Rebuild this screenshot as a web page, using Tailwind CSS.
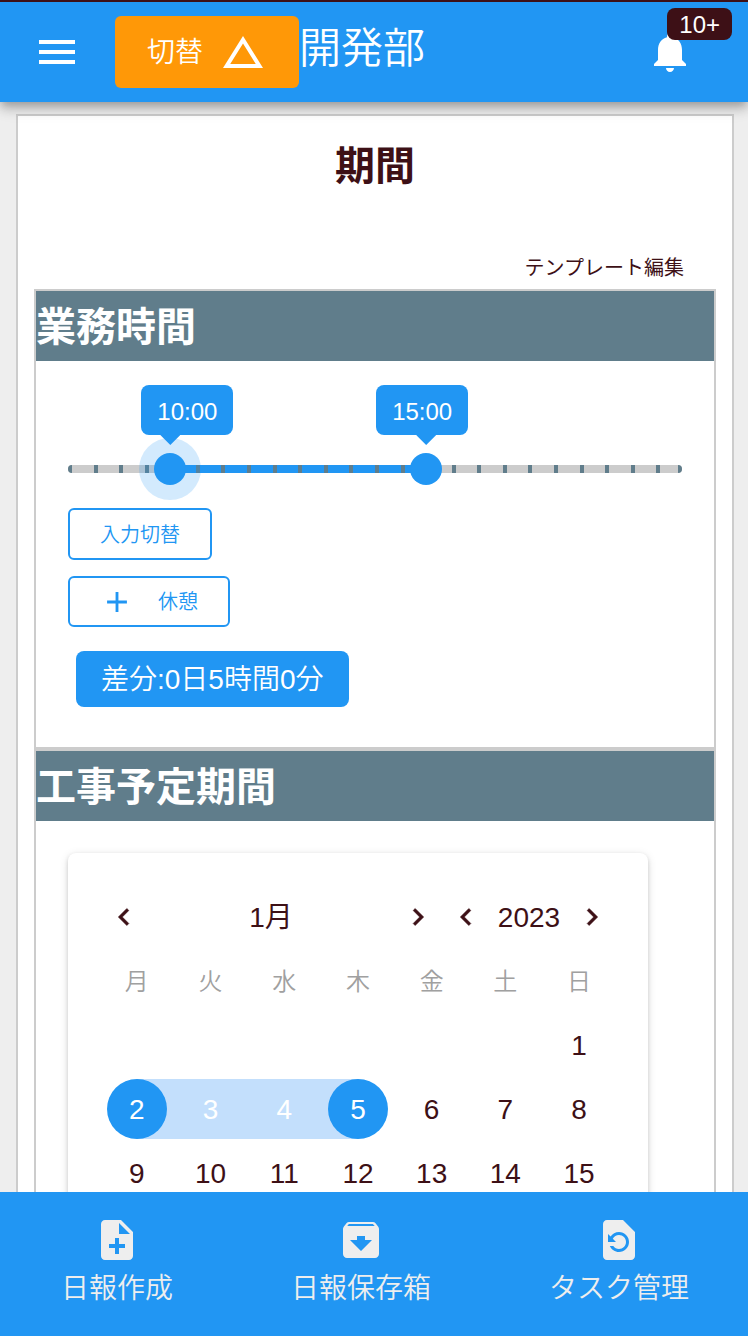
<!DOCTYPE html>
<html lang="ja">
<head>
<meta charset="utf-8">
<meta name="viewport" content="width=device-width, initial-scale=1">
<title>開発部</title>
<script src="https://cdn.jsdelivr.net/npm/@tailwindcss/browser@4"></script>
</head>
<body class="flex h-screen flex-col overflow-hidden bg-[#eeeeee] font-['Liberation_Sans','Noto_Sans_CJK_JP',sans-serif] font-[350] text-[#3d1016]">

<header class="relative z-10 flex h-[102px] shrink-0 items-start border-t-2 border-[#3d1016] bg-[#2196f3] pt-3.5 pr-[54px] pl-[33px] text-white shadow-[0_4px_8px_-2px_rgba(0,0,0,0.2),0_8px_10px_rgba(0,0,0,0.14),0_2px_20px_rgba(0,0,0,0.12)]">
  <button type="button" aria-label="メニュー" class="mr-[34px] flex h-18 items-center">
    <svg class="size-12" viewBox="0 0 24 24" fill="currentColor"><path d="M3 18h18v-2H3v2zm0-5h18v-2H3v2zm0-7v2h18V6H3z"/></svg>
  </button>
  <button type="button" class="flex h-18 items-center gap-4 rounded-md bg-[#ff9807] px-8 text-[28px]">
    <span class="pt-0.5">切替</span>
    <svg class="size-12" viewBox="0 0 24 24" fill="currentColor"><path d="M12 7.77L18.39 18H5.61L12 7.77M12 4L2 20h20L12 4z"/></svg>
  </button>
  <h1 class="flex-1 text-[42px] leading-[66px]">開発部</h1>
  <button type="button" aria-label="通知 10+" class="relative flex h-18 items-center">
    <svg class="size-12" viewBox="0 0 24 24" fill="currentColor"><path d="M12 22c1.1 0 2-.9 2-2h-4c0 1.1.89 2 2 2zm6-6v-5c0-3.07-1.64-5.64-4.5-6.32V4c0-.83-.67-1.5-1.5-1.5s-1.5.67-1.5 1.5v.68C7.63 5.36 6 7.92 6 11v5l-2 2v1h16v-1l-2-2z"/></svg>
    <span class="absolute -top-2 -right-[38px] rounded-lg bg-[#3d1016] px-3 pt-0.5 text-2xl leading-[30px]">10+</span>
  </button>
</header>

<main class="min-h-0 flex-1 overflow-y-auto pt-3 pr-3.5 pl-4 [scrollbar-width:none]">
  <div class="border-2 border-[#cccccc] bg-white px-4">
    <h2 class="pt-0.5 text-center text-[40px] leading-24 font-bold">期間</h2>
    <div class="flex justify-end pt-[30px] pr-8">
      <button type="button" class="pt-1 text-xl leading-[41px] font-normal">テンプレート編集</button>
    </div>

    <section class="border-2 border-[#cccccc]">
      <h3 class="bg-[#607d8b] pt-0.5 text-[40px] leading-[68px] font-bold text-white">業務時間</h3>
      <div class="px-8 pb-10">
        <div class="relative h-[147px]">
          <!-- Track with half-hour marks, 8:00 to 20:00 -->
          <div class="absolute inset-x-0 top-[104px] h-2 overflow-hidden rounded-full bg-[#cccccc]">
            <div class="absolute inset-y-0 bg-[#2196f3]" style="left:16.667%;right:41.667%"></div>
            <div class="absolute inset-0 bg-[repeating-linear-gradient(to_right,#607d8b_0_4px,transparent_4px_calc(100%/24))]"></div>
            <div class="absolute inset-y-0 right-0 w-1 bg-[#607d8b]"></div>
          </div>
          <div class="absolute top-[77px] size-[62px] -translate-x-1/2 rounded-full bg-[#2196f3]/20" style="left:16.667%"></div>
          <input type="range" min="0" max="24" value="4" aria-label="開始時刻" class="pointer-events-none absolute top-[92px] -left-4 h-8 w-[calc(100%+32px)] appearance-none bg-transparent [&::-webkit-slider-thumb]:pointer-events-auto [&::-webkit-slider-thumb]:size-8 [&::-webkit-slider-thumb]:appearance-none [&::-webkit-slider-thumb]:rounded-full [&::-webkit-slider-thumb]:bg-[#2196f3]">
          <input type="range" min="0" max="24" value="14" aria-label="終了時刻" class="pointer-events-none absolute top-[92px] -left-4 h-8 w-[calc(100%+32px)] appearance-none bg-transparent [&::-webkit-slider-thumb]:pointer-events-auto [&::-webkit-slider-thumb]:size-8 [&::-webkit-slider-thumb]:appearance-none [&::-webkit-slider-thumb]:rounded-full [&::-webkit-slider-thumb]:bg-[#2196f3]">
          <div class="absolute top-6" style="left:16.667%">
            <output class="-ml-[29px] block rounded-lg bg-[#2196f3] px-4 pt-1 text-2xl leading-[46px] text-white">10:00</output>
            <div class="-ml-2.5 h-2.5 w-5 bg-[#2196f3] [clip-path:polygon(0_0,100%_0,50%_100%)]"></div>
          </div>
          <div class="absolute top-6" style="left:58.333%">
            <output class="-ml-[50px] block rounded-lg bg-[#2196f3] px-4 pt-1 text-2xl leading-[46px] text-white">15:00</output>
            <div class="-ml-2.5 h-2.5 w-5 bg-[#2196f3] [clip-path:polygon(0_0,100%_0,50%_100%)]"></div>
          </div>
        </div>
        <div class="flex flex-col items-start">
          <button type="button" class="h-[52px] rounded-md border-2 border-[#2196f3] px-[30px] pt-0.5 text-xl text-[#2196f3]">入力切替</button>
          <button type="button" class="mt-4 flex h-[51px] items-center gap-6 rounded-md border-2 border-[#2196f3] px-[30px] text-xl text-[#2196f3]">
            <svg class="size-[34px]" viewBox="0 0 24 24" fill="currentColor"><path d="M19 13h-6v6h-2v-6H5v-2h6V5h2v6h6v2z"/></svg>
            休憩
          </button>
          <div class="mt-6 ml-2 rounded-lg bg-[#2196f3] px-[25px] pt-0.5 text-[28px] leading-[54px] text-white">差分:0日5時間0分</div>
        </div>
      </div>
    </section>

    <section class="border-2 border-[#cccccc]">
      <h3 class="bg-[#607d8b] pt-0.5 text-[40px] leading-[68px] font-bold text-white">工事予定期間</h3>
      <div class="p-8">
        <div class="w-full max-w-[580px] rounded-lg bg-white p-8 text-[28px] shadow-[0_2px_10px_rgba(0,0,0,0.12),0_2px_4px_rgba(0,0,0,0.14)]">
          <div class="flex h-16 items-center">
            <button type="button" aria-label="前の月" class="flex w-12 justify-center"><svg class="size-[34px]" viewBox="0 0 24 24" fill="currentColor" stroke="currentColor" stroke-width=".4"><path d="M15.41 7.41L14 6l-6 6 6 6 1.41-1.41L10.83 12z"/></svg></button>
            <button type="button" class="flex-1 pt-0.5 font-normal">1月</button>
            <button type="button" aria-label="次の月" class="flex w-12 justify-center"><svg class="size-[34px]" viewBox="0 0 24 24" fill="currentColor" stroke="currentColor" stroke-width=".4"><path d="M10 6L8.59 7.41 13.17 12l-4.58 4.59L10 18l6-6z"/></svg></button>
            <button type="button" aria-label="前の年" class="flex w-12 justify-center"><svg class="size-[34px]" viewBox="0 0 24 24" fill="currentColor" stroke="currentColor" stroke-width=".4"><path d="M15.41 7.41L14 6l-6 6 6 6 1.41-1.41L10.83 12z"/></svg></button>
            <button type="button" class="w-[78px] pt-0.5 font-normal">2023</button>
            <button type="button" aria-label="次の年" class="flex w-12 justify-center"><svg class="size-[34px]" viewBox="0 0 24 24" fill="currentColor" stroke="currentColor" stroke-width=".4"><path d="M10 6L8.59 7.41 13.17 12l-4.58 4.59L10 18l6-6z"/></svg></button>
          </div>
          <table class="w-full table-fixed text-center">
            <thead>
              <tr class="h-16 text-2xl text-[#a0a0a0]">
                <th scope="col" class="p-0 pt-0.5 font-[350]">月</th><th scope="col" class="p-0 pt-0.5 font-[350]">火</th><th scope="col" class="p-0 pt-0.5 font-[350]">水</th><th scope="col" class="p-0 pt-0.5 font-[350]">木</th><th scope="col" class="p-0 pt-0.5 font-[350]">金</th><th scope="col" class="p-0 pt-0.5 font-[350]">土</th><th scope="col" class="p-0 pt-0.5 font-[350]">日</th>
              </tr>
            </thead>
            <tbody>
              <tr class="h-16">
                <td colspan="6" class="p-0"></td>
                <td class="p-0"><button type="button" class="size-15 rounded-full pt-0.5">1</button></td>
              </tr>
              <tr class="h-16">
                <td class="p-0"><div class="flex justify-center bg-[linear-gradient(to_right,transparent_50%,#c3dffc_50%)]"><button type="button" class="size-15 rounded-full bg-[#2196f3] pt-0.5 text-white">2</button></div></td>
                <td class="p-0"><div class="flex justify-center bg-[#c3dffc]"><button type="button" class="size-15 pt-0.5 text-white">3</button></div></td>
                <td class="p-0"><div class="flex justify-center bg-[#c3dffc]"><button type="button" class="size-15 pt-0.5 text-white">4</button></div></td>
                <td class="p-0"><div class="flex justify-center bg-[linear-gradient(to_right,#c3dffc_50%,transparent_50%)]"><button type="button" class="size-15 rounded-full bg-[#2196f3] pt-0.5 text-white">5</button></div></td>
                <td class="p-0"><button type="button" class="size-15 rounded-full pt-0.5">6</button></td>
                <td class="p-0"><button type="button" class="size-15 rounded-full pt-0.5">7</button></td>
                <td class="p-0"><button type="button" class="size-15 rounded-full pt-0.5">8</button></td>
              </tr>
              <tr class="h-16">
                <td class="p-0"><button type="button" class="size-15 rounded-full pt-0.5">9</button></td>
                <td class="p-0"><button type="button" class="size-15 rounded-full pt-0.5">10</button></td>
                <td class="p-0"><button type="button" class="size-15 rounded-full pt-0.5">11</button></td>
                <td class="p-0"><button type="button" class="size-15 rounded-full pt-0.5">12</button></td>
                <td class="p-0"><button type="button" class="size-15 rounded-full pt-0.5">13</button></td>
                <td class="p-0"><button type="button" class="size-15 rounded-full pt-0.5">14</button></td>
                <td class="p-0"><button type="button" class="size-15 rounded-full pt-0.5">15</button></td>
              </tr>
            </tbody>
          </table>
        </div>
      </div>
    </section>
  </div>
</main>

<nav class="relative z-10 flex h-36 shrink-0 items-start justify-around bg-[#2196f3] pt-6 pl-0.5 text-[28px] leading-[50px] text-[#eeeeee]">
  <a href="#create" class="flex flex-col items-center">
    <svg class="size-12" viewBox="0 0 24 24" fill="currentColor"><path d="M14 2H6c-1.1 0-1.99.9-1.99 2L4 20c0 1.1.89 2 1.99 2H18c1.1 0 2-.9 2-2V8l-6-6zm2 14h-3v3h-2v-3H8v-2h3v-3h2v3h3v2zm-3-7V3.5L18.5 9H13z"/></svg>
    日報作成
  </a>
  <a href="#archive" class="flex flex-col items-center">
    <svg class="size-12" viewBox="0 0 24 24" fill="currentColor"><path d="M20.54 5.23l-1.39-1.68C18.88 3.21 18.47 3 18 3H6c-.47 0-.88.21-1.16.55L3.46 5.23C3.17 5.57 3 6.02 3 6.5V19c0 1.1.9 2 2 2h14c1.1 0 2-.9 2-2V6.5c0-.48-.17-.93-.46-1.27zM12 17.5L6.5 12H10v-2h4v2h3.5L12 17.5zM5.12 5l.81-1h12l.94 1H5.12z"/></svg>
    日報保存箱
  </a>
  <a href="#tasks" class="flex flex-col items-center">
    <svg class="size-12" viewBox="0 0 24 24" fill="currentColor"><path d="M14 2H6c-1.1 0-1.99.9-1.99 2L4 20c0 1.1.89 2 1.99 2H18c1.1 0 2-.9 2-2V8l-6-6zm-2 16c-2.05 0-3.81-1.24-4.58-3h1.71c.63.9 1.68 1.5 2.87 1.5 1.93 0 3.5-1.57 3.5-3.5S13.93 9.5 12 9.5c-1.35 0-2.52.78-3.1 1.9l1.6 1.6h-4V9l1.3 1.3C8.69 8.92 10.23 8 12 8c2.76 0 5 2.24 5 5s-2.24 5-5 5z"/></svg>
    タスク管理
  </a>
</nav>
</body>
</html>
